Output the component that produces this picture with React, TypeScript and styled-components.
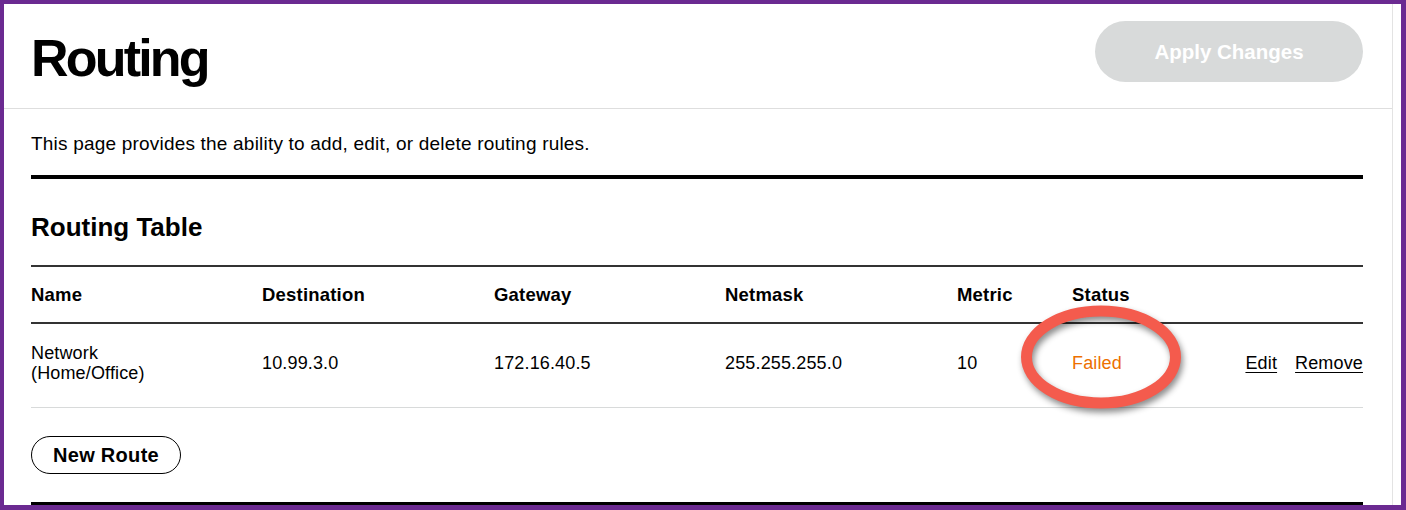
import styled, { createGlobalStyle } from 'styled-components';

const GlobalStyle = createGlobalStyle`
    html, body {
        margin: 0;
        padding: 0;
        background: #ffffff;
    }
    body {
        font-family: 'Liberation Sans', Arial, sans-serif;
        color: #000000;
    }
`;

type Route = {
    name: string[];
    destination: string;
    gateway: string;
    netmask: string;
    metric: string;
    status: string;
};

const routes: Route[] = [
    {
        name: ['Network', '(Home/Office)'],
        destination: '10.99.3.0',
        gateway: '172.16.40.5',
        netmask: '255.255.255.0',
        metric: '10',
        status: 'Failed',
    },
];

const columns = ['Name', 'Destination', 'Gateway', 'Netmask', 'Metric', 'Status'];

const Frame = styled.div`
    box-sizing: border-box;
    width: 1406px;
    height: 510px;
    border: 4px solid #6b2a91;
    border-bottom-width: 5px;
    border-right-width: 5px;
    overflow: hidden;
    background: #ffffff;
    padding-right: 8px;
`;

const Panel = styled.main`
    height: 100%;
    border-right: 1px solid #e3e3e3;
`;

const Header = styled.header`
    display: flex;
    justify-content: space-between;
    align-items: flex-start;
    height: 105px;
    padding: 17px 29px 0 27px;
    box-sizing: border-box;
    border-bottom: 1px solid #dedede;
`;

const Title = styled.h1`
    margin: 11px 0 0;
    font-size: 52px;
    line-height: 52px;
    font-weight: 700;
    letter-spacing: -2.8px;
`;

const ApplyButton = styled.button`
    all: unset;
    box-sizing: border-box;
    width: 268px;
    height: 61px;
    border-radius: 31px;
    background: #d8dada;
    color: #ffffff;
    font-family: 'Liberation Sans', Arial, sans-serif;
    font-size: 20.5px;
    font-weight: 700;
    text-align: center;
    line-height: 61px;
`;

const Body = styled.section`
    padding: 23px 29px 0 27px;
`;

const Intro = styled.p`
    margin: 0;
    font-size: 19px;
    line-height: 23px;
    letter-spacing: 0.2px;
`;

const HeavyRule = styled.hr<{ $top: number }>`
    margin: ${(p) => p.$top}px 0 0;
    border: none;
    height: 4px;
    background: #000000;
`;

const SectionTitle = styled.h2`
    margin: 33px 0 0;
    font-size: 26px;
    line-height: 30px;
    font-weight: 700;
    letter-spacing: 0;
`;

const Table = styled.div`
    margin-top: 23px;
    border-top: 2px solid #333333;
`;

const Row = styled.div<{ $head?: boolean }>`
    display: grid;
    grid-template-columns: 231px 232px 231px 232px 115px 1fr auto;
    align-items: center;
    height: ${(p) => (p.$head ? '57px' : '84px')};
    padding-bottom: ${(p) => (p.$head ? '0' : '6px')};
    box-sizing: border-box;
    border-bottom: ${(p) => (p.$head ? '2px solid #333333' : '1px solid #d8dada')};
    font-size: ${(p) => (p.$head ? '18.5px' : '18px')};
    font-weight: ${(p) => (p.$head ? 700 : 400)};
    letter-spacing: ${(p) => (p.$head ? '0.2px' : '0.15px')};
    line-height: 20px;
`;

const Cell = styled.div`
    min-width: 0;
`;

const StatusText = styled.span<{ $failed?: boolean }>`
    position: relative;
    display: inline-block;
    line-height: 22px;
    color: ${(p) => (p.$failed ? '#ed7000' : '#000000')};
`;

const Highlight = styled.svg`
    position: absolute;
    left: -61px;
    top: -53px;
    width: 180px;
    height: 125px;
    overflow: visible;
    pointer-events: none;
    filter: drop-shadow(2px 4px 3px rgba(0, 0, 0, 0.45));
`;

const Actions = styled.div`
    display: flex;
    gap: 18px;
`;

const TextLink = styled.a`
    color: #000000;
    text-decoration: underline;
    text-underline-offset: 3px;
    cursor: pointer;
`;

const OutlineButton = styled.button`
    all: unset;
    box-sizing: border-box;
    margin-top: 28px;
    width: 150px;
    height: 38px;
    border: 1.5px solid #000000;
    border-radius: 19px;
    font-family: 'Liberation Sans', Arial, sans-serif;
    font-size: 20px;
    font-weight: 700;
    letter-spacing: 0.3px;
    text-align: center;
    line-height: 35px;
`;

export default function App() {
    return (
        <>
            <GlobalStyle />
            <Frame>
                <Panel>
                    <Header>
                        <Title>Routing</Title>
                        <ApplyButton disabled>Apply Changes</ApplyButton>
                    </Header>
                    <Body>
                        <Intro>This page provides the ability to add, edit, or delete routing rules.</Intro>
                        <HeavyRule $top={20} />
                        <SectionTitle>Routing Table</SectionTitle>
                        <Table>
                            <Row $head>
                                {columns.map((c) => (
                                    <Cell key={c}>{c}</Cell>
                                ))}
                                <Cell />
                            </Row>
                            {routes.map((r) => (
                                <Row key={r.destination}>
                                    <Cell>
                                        {r.name.map((line) => (
                                            <div key={line}>{line}</div>
                                        ))}
                                    </Cell>
                                    <Cell>{r.destination}</Cell>
                                    <Cell>{r.gateway}</Cell>
                                    <Cell>{r.netmask}</Cell>
                                    <Cell>{r.metric}</Cell>
                                    <Cell>
                                        <StatusText $failed={r.status === 'Failed'}>
                                            {r.status}
                                            <Highlight viewBox="0 0 180 125">
                                                <ellipse
                                                    cx="90"
                                                    cy="58"
                                                    rx="74.5"
                                                    ry="46"
                                                    fill="none"
                                                    stroke="#f45b4d"
                                                    strokeWidth="11"
                                                />
                                            </Highlight>
                                        </StatusText>
                                    </Cell>
                                    <Actions>
                                        <TextLink>Edit</TextLink>
                                        <TextLink>Remove</TextLink>
                                    </Actions>
                                </Row>
                            ))}
                        </Table>
                        <OutlineButton>New Route</OutlineButton>
                        <HeavyRule $top={28} />
                    </Body>
                </Panel>
            </Frame>
        </>
    );
}
